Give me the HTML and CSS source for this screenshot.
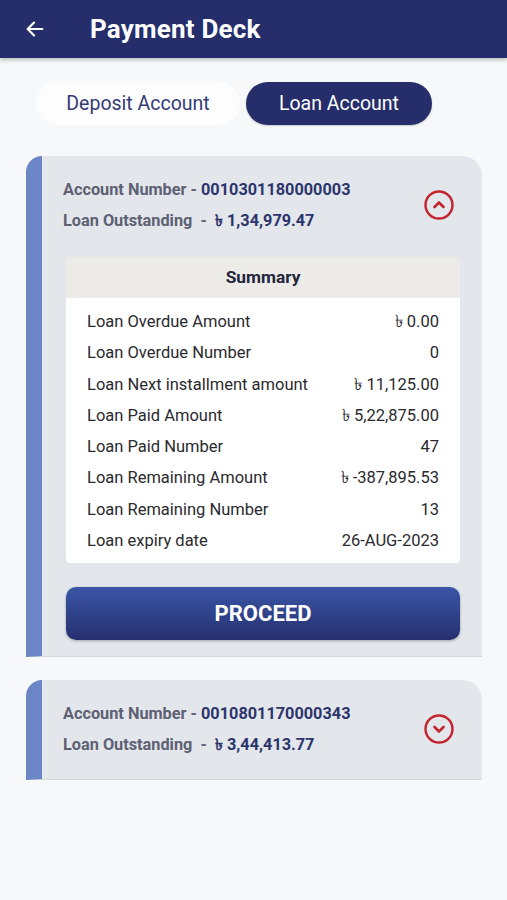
FILE: index.html
```html
<!DOCTYPE html>
<html lang="en">
<head>
    <meta charset="UTF-8">
    <meta name="viewport" content="width=device-width, initial-scale=1.0">
    <title>Payment Deck</title>
    <link rel="stylesheet" href="styles.css">
</head>
<body>
    <header class="topbar">
        <svg class="back" width="22" height="22" viewBox="0 0 24 24">
            <path d="M20 12H5M11 5l-7 7 7 7" fill="none" stroke="#fff" stroke-width="2.4" stroke-linecap="round" stroke-linejoin="round"/>
        </svg>
        <h1>Payment Deck</h1>
    </header>

    <div class="tabs">
        <div class="tab">Deposit Account</div>
        <div class="tab active">Loan Account</div>
    </div>

    <div class="card">
        <div class="card-head">
            <div class="info">
                <div class="line"><span class="lbl">Account Number - </span><span class="val">0010301180000003</span></div>
                <div class="line"><span class="lbl">Loan Outstanding &nbsp;- &nbsp;</span><span class="val">৳ 1,34,979.47</span></div>
            </div>
            <svg class="toggle" width="32" height="32" viewBox="0 0 32 32">
                <circle cx="16" cy="16" r="13.5" fill="none" stroke="#c3242e" stroke-width="2.4"/>
                <path d="M11.5 18l4.5-4.5 4.5 4.5" fill="none" stroke="#c3242e" stroke-width="2.6" stroke-linecap="round" stroke-linejoin="round"/>
            </svg>
        </div>

        <div class="summary">
            <div class="summary-title">Summary</div>
            <div class="summary-body">
                <div class="row"><span>Loan Overdue Amount</span><span>৳ 0.00</span></div>
                <div class="row"><span>Loan Overdue Number</span><span>0</span></div>
                <div class="row"><span>Loan Next installment amount</span><span>৳ 11,125.00</span></div>
                <div class="row"><span>Loan Paid Amount</span><span>৳ 5,22,875.00</span></div>
                <div class="row"><span>Loan Paid Number</span><span>47</span></div>
                <div class="row"><span>Loan Remaining Amount</span><span>৳ -387,895.53</span></div>
                <div class="row"><span>Loan Remaining Number</span><span>13</span></div>
                <div class="row"><span>Loan expiry date</span><span>26-AUG-2023</span></div>
            </div>
        </div>

        <button class="proceed" type="button">PROCEED</button>
    </div>

    <div class="card">
        <div class="card-head closed">
            <div class="info">
                <div class="line"><span class="lbl">Account Number - </span><span class="val">0010801170000343</span></div>
                <div class="line"><span class="lbl">Loan Outstanding &nbsp;- &nbsp;</span><span class="val">৳ 3,44,413.77</span></div>
            </div>
            <svg class="toggle" width="32" height="32" viewBox="0 0 32 32">
                <circle cx="16" cy="16" r="13.5" fill="none" stroke="#c3242e" stroke-width="2.4"/>
                <path d="M11.5 14l4.5 4.5 4.5-4.5" fill="none" stroke="#c3242e" stroke-width="2.6" stroke-linecap="round" stroke-linejoin="round"/>
            </svg>
        </div>
    </div>
</body>
</html>
```

FILE: styles.css
```css
body {
    margin: 0;
    font-family: Roboto, "Noto Sans", "DejaVu Sans", sans-serif;
    background-color: #f7f8f9;
    color: #222;
}
.topbar {
    height: 58px;
    background-color: #252e6b;
    display: flex;
    align-items: center;
    padding-left: 24px;
    box-shadow: 0 2px 4px rgba(0, 0, 0, 0.25);
}
.topbar h1 {
    margin: 0 0 0 44px;
    color: #fff;
    font-size: 26px;
    font-weight: 700;
    letter-spacing: 0.2px;
}
.tabs {
    display: flex;
    gap: 6px;
    padding: 24px 0 0 36px;
}
.tab {
    height: 43px;
    line-height: 43px;
    border-radius: 22px;
    text-align: center;
    font-size: 19.5px;
    color: #353b75;
    background-color: #fdfdfd;
    width: 204px;
}
.tab.active {
    width: 186px;
    background-color: #252e6b;
    color: #fff;
    box-shadow: 0 1px 2px rgba(0, 0, 0, 0.2);
}
.card {
    margin: 31px 25px 0 26px;
    background-color: #e3e6eb;
    border-left: 16px solid #6b86c6;
    border-radius: 16px 20px 0 0;
    padding: 0 22px 16px 24px;
    border-bottom: 1px solid #d4d7dc;
}
.card + .card {
    margin-top: 23px;
    padding-bottom: 0;
}
.card-head {
    display: flex;
    align-items: center;
    justify-content: space-between;
    padding: 18px 5px 0 0;
    margin-left: -3px;
}
.card-head.closed {
    padding-bottom: 19px;
}
.line {
    line-height: 31px;
    font-size: 16.3px;
    font-weight: 700;
}
.lbl {
    color: #5d6173;
}
.val {
    color: #2c356b;
}
.summary {
    margin-top: 21px;
    border-radius: 4px;
    overflow: hidden;
}
.summary-title {
    height: 41px;
    line-height: 41px;
    text-align: center;
    background-color: #ecebe8;
    font-size: 17.3px;
    font-weight: 700;
    color: #23253a;
}
.summary-body {
    background-color: #fff;
    padding: 8px 21px 7px;
}
.row {
    display: flex;
    justify-content: space-between;
    line-height: 31.3px;
    font-size: 16.5px;
    color: #2a2a2e;
}
.proceed {
    display: block;
    width: 100%;
    height: 53px;
    margin-top: 24px;
    border: none;
    border-radius: 10px;
    background: linear-gradient(#3a55a6, #26306f);
    color: #fff;
    font-family: inherit;
    font-size: 22px;
    font-weight: 700;
    box-shadow: 0 1px 3px rgba(0, 0, 0, 0.3);
}
```
